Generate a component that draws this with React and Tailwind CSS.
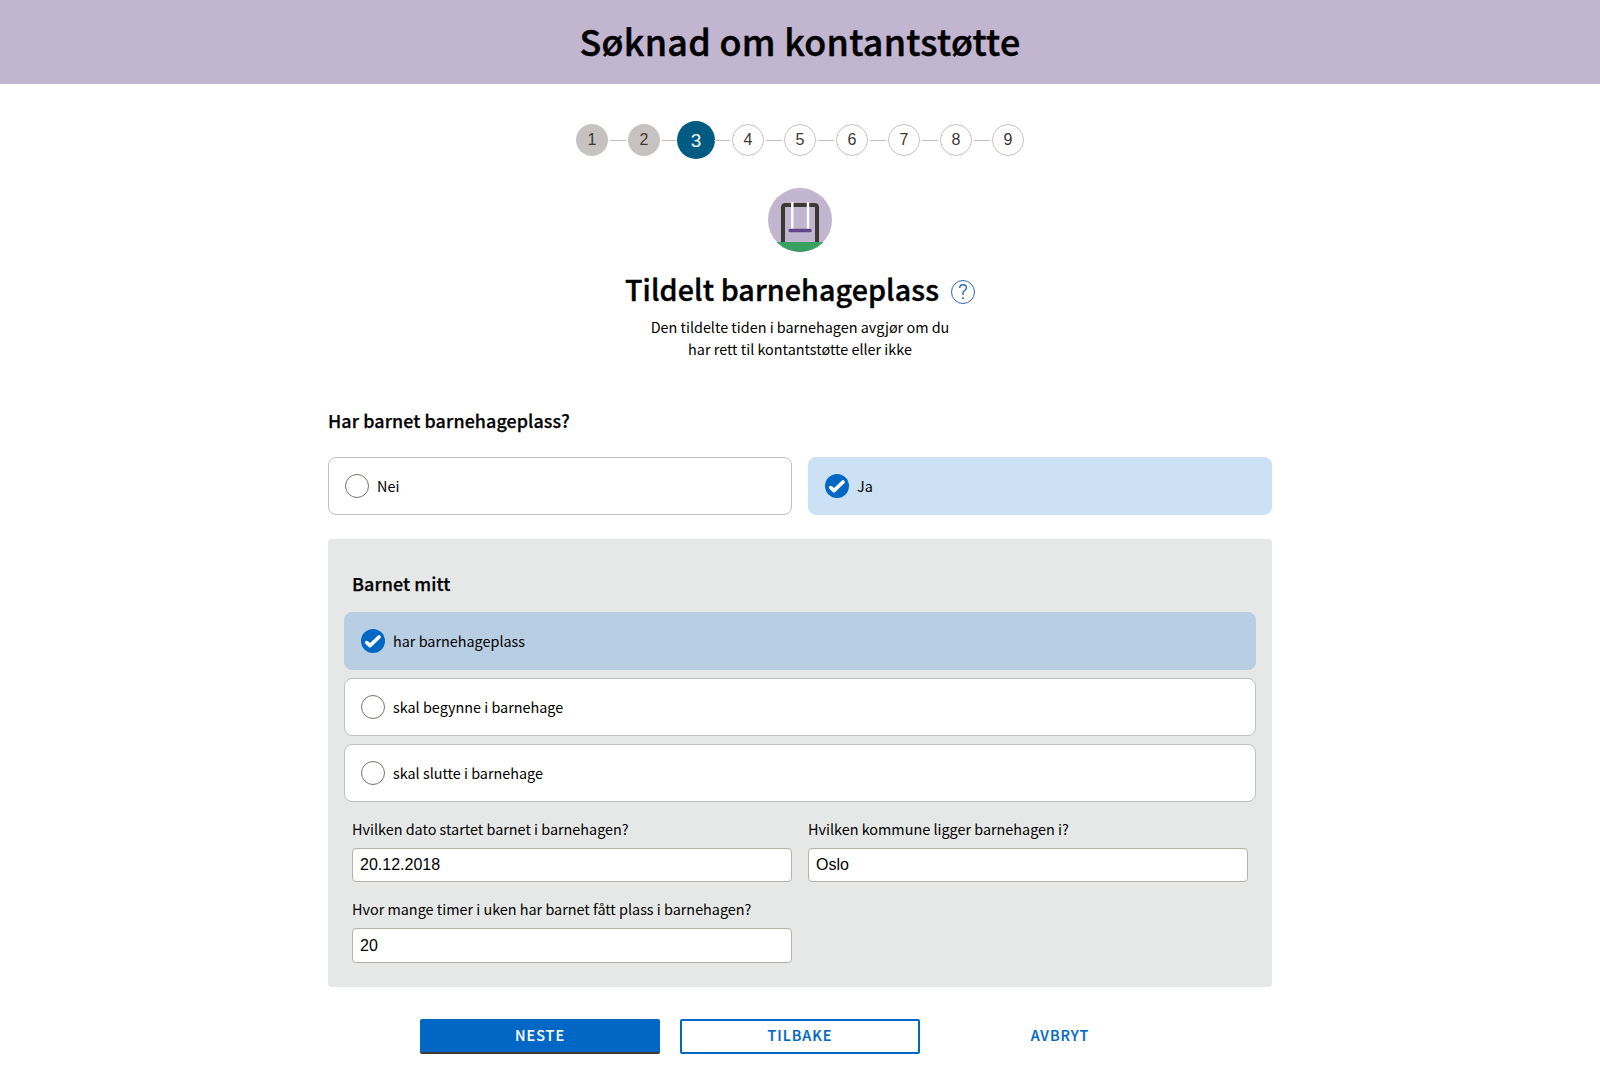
const steps = [1, 2, 3, 4, 5, 6, 7, 8, 9];

function Stepper() {
  return (
    <ol className="mt-9 flex h-10 items-center justify-center font-['Liberation_Sans',Arial,sans-serif] text-base text-[#3e3832]">
      {steps.map((n) => (
        <li key={n} className="flex items-center">
          {n > 1 && <span className={n === 4 ? "mr-0.5 ml-[-1px] h-px w-[16px] bg-[#c6c2bf]" : n === 3 ? "ml-0.5 h-px w-[15px] bg-[#c6c2bf]" : "mx-0.5 h-px w-4 bg-[#c6c2bf]"} />}
          {n === 3 ? (
            <span className="flex size-[38px] items-center justify-center rounded-full bg-[#005b82] text-[19px] leading-none text-white">{n}</span>
          ) : n < 3 ? (
            <span className="flex size-8 items-center justify-center rounded-full bg-[#c6c2bf] leading-none">{n}</span>
          ) : (
            <span className="flex size-8 items-center justify-center rounded-full border border-[#c6c2bf] bg-white leading-none">{n}</span>
          )}
        </li>
      ))}
    </ol>
  );
}

function SwingIcon() {
  return (
    <svg className="mt-7 size-16" viewBox="0 0 64 64">
      <defs>
        <clipPath id="disc"><circle cx="32" cy="32" r="32" /></clipPath>
      </defs>
      <g clipPath="url(#disc)">
        <rect width="64" height="64" fill="#c1b5d0" />
        <path d="M15 55V19.500Q15 17 17.500 17H46.500Q49 17 49 19.500V55" fill="none" stroke="#3e3832" strokeWidth="4" />
        <rect y="54" width="64" height="10" fill="#38a161" />
        <path d="M24.300 14V42M40 14V42" stroke="#fff" strokeWidth="2.400" />
        <path d="M22.200 42.500H42" stroke="#634689" strokeWidth="3.600" strokeLinecap="round" />
      </g>
    </svg>
  );
}

function HelpIcon() {
  return (
    <svg className="mt-[5px] size-6" viewBox="0 0 24 24" fill="none" stroke="#2968b5">
      <circle cx="12" cy="12" r="11.500" />
      <path d="M8.700 8C8.700 6 10.100 4.800 12 4.800s3.400 1.200 3.400 3c0 2.600-3.400 2.900-3.400 5.400v1.800" strokeWidth="1.400" />
      <circle cx="12" cy="18.200" r="1" fill="#2968b5" stroke="none" />
    </svg>
  );
}

function Mark({ checked }) {
  return (
    <svg className="size-6 shrink-0" viewBox="0 0 24 24" fill="none">
      {checked ? (
        <>
          <circle cx="12" cy="12" r="12" fill="#0067c5" />
          <path d="M5.800 13.600L9 16.600L18 8" stroke="#fff" strokeWidth="3.700" strokeLinecap="round" strokeLinejoin="round" />
        </>
      ) : (
        <circle cx="12" cy="12" r="11.500" fill="#fff" stroke="#78706a" />
      )}
    </svg>
  );
}

function Option({ label, checked, tone = "border-[#cce1f3] bg-[#cce1f3]" }) {
  return (
    <label className={`flex h-[58px] items-center gap-2 rounded-lg border pl-4 ${checked ? tone : "border-[#c1c1c1] bg-white"}`}>
      <Mark checked={checked} />
      <span>{label}</span>
    </label>
  );
}

function Field({ label, value, tall }) {
  return (
    <label className="flex flex-col">
      <span className="h-[30px] leading-[22px]">{label}</span>
      <input
        className={`${tall ? "h-[35px]" : "h-[34px]"} w-full rounded border border-[#b7b1a9] bg-white px-[7px] font-['Liberation_Sans',Arial,sans-serif] text-base text-black outline-none`}
        defaultValue={value}
      />
    </label>
  );
}

export default function App() {
  return (
    <div className="h-[1086px] overflow-hidden bg-white font-['Noto_Sans_CJK_SC',sans-serif] text-[14.4px] leading-[22px] text-black">
      <header className="flex h-[84px] items-center justify-center bg-[#c1b5d0] pb-1">
        <h1 className="text-[35.8px] leading-[50px] font-medium tracking-[0.3px] [-webkit-text-stroke:0.5px_black]">Søknad om kontantstøtte</h1>
      </header>
      <main className="flex flex-col items-center">
        <Stepper />
        <SwingIcon />
        <div className="mt-4 flex h-[42px] items-center gap-3">
          <h2 className="text-[28.65px] leading-[42px] font-medium tracking-[0.1px] [-webkit-text-stroke:0.4px_black]">Tildelt barnehageplass</h2>
          <HelpIcon />
        </div>
        <p className="mt-1.5 text-center">Den tildelte tiden i barnehagen avgjør om du<br />har rett til kontantstøtte eller ikke</p>
        <div className="mt-[47px] w-[944px]">
          <h3 className="h-[50px] text-[17.9px] leading-[26px] font-medium tracking-[0.08px] [-webkit-text-stroke:0.25px_black]">Har barnet barnehageplass?</h3>
          <div className="grid grid-cols-2 gap-4">
            <Option label="Nei" />
            <Option label="Ja" checked />
          </div>
          <section className="mt-6 h-[448px] rounded bg-[#e6e8e7] px-4 pt-[31px]">
            <h3 className="mb-4 pl-2 text-[17.9px] leading-[26px] font-medium tracking-[0.08px] [-webkit-text-stroke:0.25px_black]">Barnet mitt</h3>
            <div className="flex flex-col gap-2">
              <Option label="har barnehageplass" checked tone="border-[#b8cee3] bg-[#b8cee3]" />
              <Option label="skal begynne i barnehage" />
              <Option label="skal slutte i barnehage" />
            </div>
            <div className="mt-4 grid grid-cols-2 gap-x-4 gap-y-4 px-2">
              <Field label="Hvilken dato startet barnet i barnehagen?" value="20.12.2018" />
              <Field label="Hvilken kommune ligger barnehagen i?" value="Oslo" />
              <Field label="Hvor mange timer i uken har barnet fått plass i barnehagen?" value="20" tall />
            </div>
          </section>
        </div>
        <div className="mt-8 flex gap-5 font-medium tracking-[1px]">
          <button className="h-[35px] w-[240px] rounded-xs border-b-2 border-[#3e3832] bg-[#0067c5] pb-px text-white [-webkit-text-stroke:0.1px_white]">NESTE</button>
          <button className="h-[35px] w-[240px] rounded-xs border-2 border-[#0067c5] pb-[3px] text-[#0067c5] [-webkit-text-stroke:0.2px_#0067c5]">TILBAKE</button>
          <button className="h-[35px] w-[240px] pb-[3px] text-[#0067c5] [-webkit-text-stroke:0.2px_#0067c5]">AVBRYT</button>
        </div>
      </main>
    </div>
  );
}
